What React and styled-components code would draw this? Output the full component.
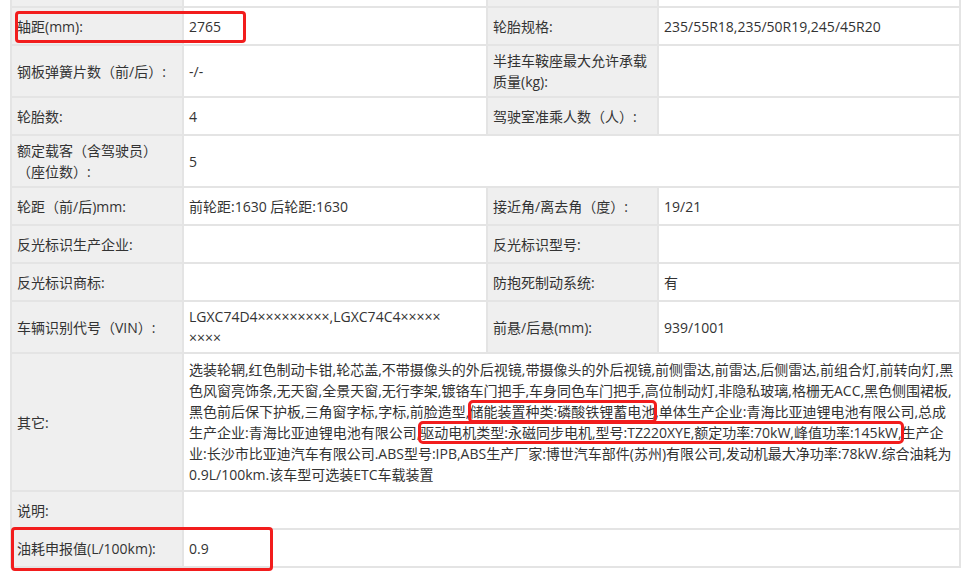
import React from "react";
import styled, { createGlobalStyle } from "styled-components";

const GlobalStyle = createGlobalStyle`
  html, body {
    margin: 0;
    padding: 0;
    background: #fff;
    overflow: hidden;
  }
  body {
    font-family: "Open Sans", "Noto Sans CJK SC", sans-serif;
    font-size: 14px;
    color: #333;
  }
`;

const rows = [
  { cells: [["", ""], ["", ""]] },
  { cells: [["轴距(mm):", "2765"], ["轮胎规格:", "235/55R18,235/50R19,245/45R20"]] },
  { cells: [["钢板弹簧片数（前/后）:", "-/-"], ["半挂车鞍座最大允许承载质量(kg):", ""]] },
  { cells: [["轮胎数:", "4"], ["驾驶室准乘人数（人）:", ""]] },
  { cells: [["额定载客（含驾驶员）（座位数）:", "5"]] },
  { cells: [["轮距（前/后)mm:", "前轮距:1630 后轮距:1630"], ["接近角/离去角（度）:", "19/21"]] },
  { cells: [["反光标识生产企业:", ""], ["反光标识型号:", ""]] },
  { cells: [["反光标识商标:", ""], ["防抱死制动系统:", "有"]] },
  {
    cells: [
      ["车辆识别代号（VIN）:", ["LGXC74D4×××××××××,LGXC74C4×××××", "××××"]],
      ["前悬/后悬(mm):", "939/1001"],
    ],
  },
];

const otherLines = [
  ["选装轮辋,红色制动卡钳,轮芯盖,不带摄像头的外后视镜,带摄像头的外后视镜,前侧雷达,前雷达,后侧雷达,前组合灯,前转向灯,黑"],
  ["色风窗亮饰条,无天窗,全景天窗,无行李架,镀铬车门把手,车身同色车门把手,高位制动灯,非隐私玻璃,格栅无ACC,黑色侧围裙板,"],
  ["黑色前后保下护板,三角窗字标,字标,前脸造型,", { mark: "储能装置种类:磷酸铁锂蓄电池" }, ",单体生产企业:青海比亚迪锂电池有限公司,总成"],
  ["生产企业:青海比亚迪锂电池有限公司,", { mark: "驱动电机类型:永磁同步电机,型号:TZ220XYE,额定功率:70kW,峰值功率:145kW," }, "生产企"],
  ["业:长沙市比亚迪汽车有限公司.ABS型号:IPB,ABS生产厂家:博世汽车部件(苏州)有限公司,发动机最大净功率:78kW.综合油耗为"],
  ["0.9L/100km.该车型可选装ETC车载装置"],
];

export default function App() {
  return (
    <>
      <GlobalStyle />
      <Page>
        <Sheet>
          {rows.map((row, i) =>
            row.cells.length === 2 ? (
              <React.Fragment key={i}>
                <Label>{row.cells[0][0]}</Label>
                <Value>{renderValue(row.cells[0][1])}</Value>
                <Label>{row.cells[1][0]}</Label>
                <Value>{renderValue(row.cells[1][1])}</Value>
              </React.Fragment>
            ) : (
              <React.Fragment key={i}>
                <Label>{row.cells[0][0]}</Label>
                <Value $wide>{renderValue(row.cells[0][1])}</Value>
              </React.Fragment>
            )
          )}
          <Label>其它:</Label>
          <Value $wide $tall>
            <div>
              {otherLines.map((parts, i) => (
                <Line key={i}>
                  {parts.map((p, j) =>
                    typeof p === "string" ? (
                      <React.Fragment key={j}>{p}</React.Fragment>
                    ) : (
                      <Mark key={j}>{p.mark}</Mark>
                    )
                  )}
                </Line>
              ))}
            </div>
          </Value>
          <Label>说明:</Label>
          <Value $wide />
          <Label>油耗申报值(L/100km):</Label>
          <Value $wide>0.9</Value>
        </Sheet>
        <Callout $top={11} $left={15} $width={231} $height={32} />
        <Callout $top={527} $left={11} $width={262} $height={44} />
      </Page>
    </>
  );
}

function renderValue(v) {
  if (Array.isArray(v)) {
    return (
      <div>
        {v.map((l, i) => (
          <Line key={i}>{l}</Line>
        ))}
      </div>
    );
  }
  return v;
}

const Page = styled.div`
  position: relative;
  width: 977px;
  height: 582px;
  overflow: hidden;
`;

const Sheet = styled.div`
  display: grid;
  grid-template-columns: 172px 304px 171px 302px;
  width: 949px;
  margin: -32px 0 0 10px;
  border-left: 2px solid #e4e4e4;
  border-top: 2px solid #e4e4e4;
`;

const Cell = styled.div`
  box-sizing: border-box;
  display: flex;
  align-items: center;
  min-height: 38px;
  padding: 4px 5px;
  line-height: 21px;
  border-right: 2px solid #e4e4e4;
  border-bottom: 2px solid #e4e4e4;
`;

const Label = styled(Cell)`
  background: #efefef;
`;

const Value = styled(Cell)`
  background: #fff;
  grid-column: ${(p) => (p.$wide ? "span 3" : "auto")};
  padding: ${(p) => (p.$tall ? "5px 5px" : "4px 5px")};
`;

const Line = styled.div`
  white-space: nowrap;
`;

const Mark = styled.span`
  outline: 3px solid #f21d1d;
  outline-offset: -1px;
  border-radius: 3px;
`;

const Callout = styled.div`
  position: absolute;
  top: ${(p) => p.$top}px;
  left: ${(p) => p.$left}px;
  width: ${(p) => p.$width}px;
  height: ${(p) => p.$height}px;
  box-sizing: border-box;
  border: 3px solid #f21d1d;
  border-radius: 4px;
  pointer-events: none;
`;
